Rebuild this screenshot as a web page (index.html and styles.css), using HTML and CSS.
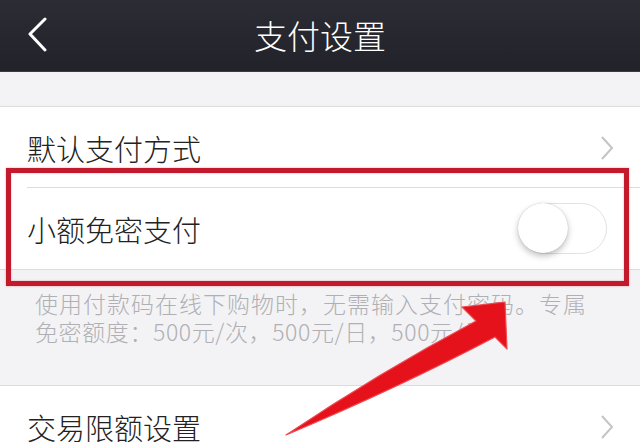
FILE: index.html
```html
<!DOCTYPE html>
<html lang="zh">
<head>
<meta charset="utf-8">
<link rel="stylesheet" href="styles.css">
</head>
<body>
<div class="screen">
  <header class="nav">
    <svg class="back" width="24" height="36" viewBox="0 0 24 36"><path d="M19 2 L4 17 L19 33" fill="none" stroke="#fff" stroke-width="3" stroke-linecap="round" stroke-linejoin="round"/></svg>
    <div class="title">支付设置</div>
  </header>
  <div class="gap"></div>
  <section class="group">
    <div class="row inset">
      <span class="label">默认支付方式</span>
      <svg class="chev" width="14" height="26" viewBox="0 0 14 26"><path d="M2 2 L12 13 L2 24" fill="none" stroke="#c4c4c8" stroke-width="2"/></svg>
    </div>
    <div class="row">
      <span class="label">小额免密支付</span>
      <div class="toggle"><div class="knob"></div></div>
    </div>
  </section>
  <div class="desc">
    <div class="line">使用付款码在线下购物时，无需输入支付密码。专属</div>
    <div class="line tight">免密额度：500元/次，500元/日，500元/月</div>
  </div>
  <section class="group">
    <div class="row">
      <span class="label">交易限额设置</span>
      <svg class="chev" width="14" height="26" viewBox="0 0 14 26"><path d="M2 2 L12 13 L2 24" fill="none" stroke="#c4c4c8" stroke-width="2"/></svg>
    </div>
  </section>
  <div class="highlight"></div>
  <svg class="arrow" width="640" height="446" viewBox="0 0 640 446"><path d="M286 435 Q 380 372 476 321 L 462 307 L 505 302 L 507 349 L 495 337 Q 398 388 286 435 Z" fill="#e5121b" stroke="#ee4a50" stroke-width="1.2" stroke-linejoin="round"/></svg>
</div>
</body>
</html>
```
FILE: styles.css
```css
* { box-sizing: border-box; }
html, body { margin: 0; padding: 0; }
body {
  width: 640px;
  height: 446px;
  overflow: hidden;
  background: #f3f3f5;
  font-family: "Noto Sans CJK SC", "Noto Sans", sans-serif;
  font-weight: 300;
}
.screen { position: relative; width: 640px; height: 446px; overflow: hidden; }
.nav {
  height: 72px;
  background: linear-gradient(#2c2c34, #22222a);
  border-bottom: 1px solid #3a3a42;
  display: flex;
  align-items: center;
  justify-content: center;
  position: relative;
}
.back { position: absolute; left: 26px; top: 17px; }
.title {
  color: #fff;
  font-size: 33px;
  line-height: 40px;
  margin-top: -2px;
}
.gap { height: 34px; }
.group {
  background: #fff;
  border-top: 1px solid #dcdcdf;
  border-bottom: 1px solid #dcdcdf;
}
.row {
  height: 81px;
  display: flex;
  align-items: center;
  justify-content: space-between;
  padding: 0 26px 0 27px;
  position: relative;
}
.row.inset::after {
  content: "";
  position: absolute;
  left: 27px;
  right: 0;
  bottom: 0;
  height: 1px;
  background: #dcdcdf;
}
.label {
  font-size: 29px;
  color: #222;
  line-height: 40px;
}
.toggle {
  width: 88px;
  height: 51px;
  border-radius: 26px;
  border: 1.5px solid #e2e2e4;
  background: #fff;
  position: relative;
  margin-right: 7px;
}
.knob {
  width: 50px;
  height: 50px;
  border-radius: 50%;
  background: #fff;
  position: absolute;
  left: -2px;
  top: -1px;
  box-shadow: 0 3px 6px rgba(0,0,0,0.25), 0 0 1px rgba(0,0,0,0.25);
}
.desc {
  padding: 19px 20px 40px 35px;
  color: #b0b0b4;
  white-space: nowrap;
}
.line {
  font-size: 23px;
  letter-spacing: 1px;
  line-height: 28px;
  height: 28px;
}
.line.tight { letter-spacing: 0.6px; }
.highlight {
  position: absolute;
  left: 6px;
  top: 168px;
  width: 623px;
  height: 118px;
  border: 5px solid #c21a2c;
  box-shadow: 0 0 2px rgba(230,60,80,0.5), inset 0 0 2px rgba(230,60,80,0.5);
}
.arrow { position: absolute; left: 0; top: 0; }
```
